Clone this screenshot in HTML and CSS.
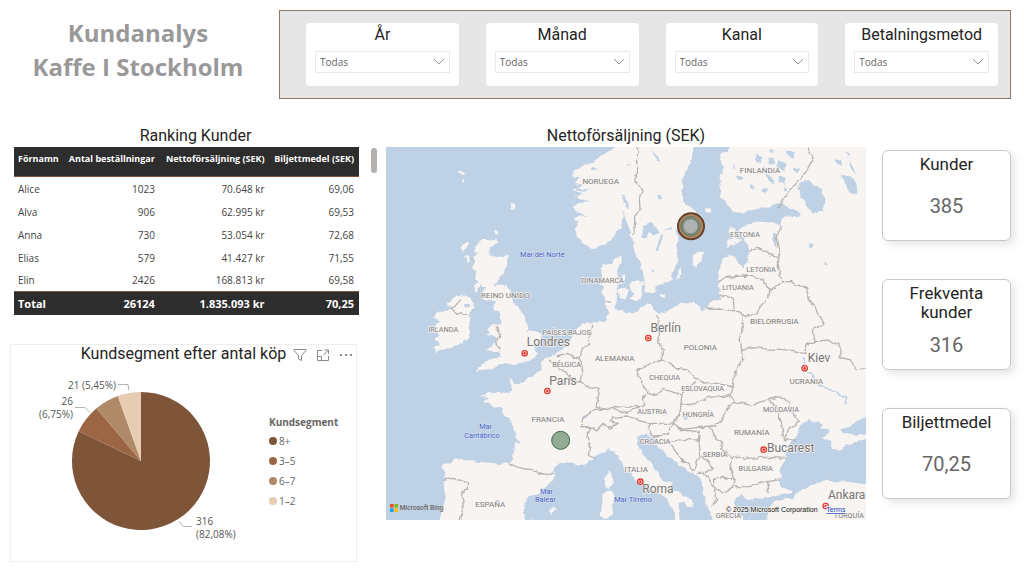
FILE: index.html
```html
<!DOCTYPE html>
<html lang="sv">
<head>
<meta charset="utf-8">
<meta name="viewport" content="width=device-width, initial-scale=1">
<title>Kundanalys – Kaffe I Stockholm</title>
<link rel="stylesheet" href="styles.css">
</head>
<body>
<div class="page">
  <header class="top">
    <h1 class="title">Kundanalys<br>Kaffe I Stockholm</h1>
    <form class="filters">
      <div class="filter">
        <label for="ar">År</label>
        <div class="pick"><select id="ar"><option>Todas</option></select><svg class="chev" viewBox="0 0 12 8"><path d="M1 1l5 5 5-5"/></svg></div>
      </div>
      <div class="filter">
        <label for="manad">Månad</label>
        <div class="pick"><select id="manad"><option>Todas</option></select><svg class="chev" viewBox="0 0 12 8"><path d="M1 1l5 5 5-5"/></svg></div>
      </div>
      <div class="filter">
        <label for="kanal">Kanal</label>
        <div class="pick"><select id="kanal"><option>Todas</option></select><svg class="chev" viewBox="0 0 12 8"><path d="M1 1l5 5 5-5"/></svg></div>
      </div>
      <div class="filter">
        <label for="betalning">Betalningsmetod</label>
        <div class="pick"><select id="betalning"><option>Todas</option></select><svg class="chev" viewBox="0 0 12 8"><path d="M1 1l5 5 5-5"/></svg></div>
      </div>
    </form>
  </header>

  <main class="board">
    <div class="left">
      <section class="ranking">
        <h2 class="heading">Ranking Kunder</h2>
        <div class="table-wrap">
          <table class="table">
            <colgroup><col class="c-name"><col class="c-orders"><col class="c-net"><col class="c-avg"></colgroup>
            <thead><tr><th>Förnamn</th><th>Antal beställningar</th><th>Nettoförsäljning (SEK)</th><th>Biljettmedel (SEK)</th></tr></thead>
            <tbody>
              <tr><td>Alice</td><td>1023</td><td>70.648 kr</td><td>69,06</td></tr>
              <tr><td>Alva</td><td>906</td><td>62.995 kr</td><td>69,53</td></tr>
              <tr><td>Anna</td><td>730</td><td>53.054 kr</td><td>72,68</td></tr>
              <tr><td>Elias</td><td>579</td><td>41.427 kr</td><td>71,55</td></tr>
              <tr><td>Elin</td><td>2426</td><td>168.813 kr</td><td>69,58</td></tr>
            </tbody>
            <tfoot><tr><td>Total</td><td>26124</td><td>1.835.093 kr</td><td>70,25</td></tr></tfoot>
          </table>
          <div class="thumb"></div>
        </div>
      </section>

      <section class="segment">
        <div class="segment-head">
          <h2 class="heading">Kundsegment efter antal köp</h2>
          <div class="tools">
            <button type="button" aria-label="Filter"><svg viewBox="0 0 14 14"><path d="M1 1.500h12v1L8.500 7.500v5l-3-1.500V7.500L1 2.500z"/></svg></button>
            <button type="button" aria-label="Fokusläge"><svg viewBox="0 0 14 14"><path d="M6 2.500H1.500v10h11V8M1.500 8.500h4v4M7 7.500l5-5M8.500 2h4v4"/></svg></button>
            <button type="button" aria-label="Fler alternativ"><svg viewBox="0 0 14 14"><g class="dots"><circle cx="2" cy="7" r="1"/><circle cx="7" cy="7" r="1"/><circle cx="12" cy="7" r="1"/></g></svg></button>
          </div>
        </div>
        <div class="segment-body">
          <svg class="pie" viewBox="1 -1 250 194">
            <path class="s1" d="M131 97V28A69 69 0 1 1 68.700 67.300z"/>
            <path class="s2" d="M131 97L68.700 67.300A69 69 0 0 1 86.500 44.300z"/>
            <path class="s3" d="M131 97L86.500 44.300A69 69 0 0 1 107.800 32z"/>
            <path class="s4" d="M131 97L107.800 32A69 69 0 0 1 131 28z"/>
            <path class="lead" d="M108 20.500h10l1 6M65 43.500h10l5 5M169 157l4 5.500h9"/>
            <text x="106" y="25" text-anchor="end">21 (5,45%)</text>
            <text x="63" y="41" text-anchor="end">26</text>
            <text x="63" y="54" text-anchor="end">(6,75%)</text>
            <text x="186" y="161">316</text>
            <text x="186" y="174">(82,08%)</text>
          </svg>
          <div class="legend">
            <h3>Kundsegment</h3>
            <ul>
              <li><i class="d1"></i>8+</li>
              <li><i class="d2"></i>3–5</li>
              <li><i class="d3"></i>6–7</li>
              <li><i class="d4"></i>1–2</li>
            </ul>
          </div>
        </div>
      </section>
    </div>

    <section class="geo">
      <h2 class="heading">Nettoförsäljning (SEK)</h2>
      <svg class="map" viewBox="18 21 1440 1119">
        <defs>
          <filter id="coast" filterUnits="userSpaceOnUse" x="-20" y="-20" width="1520" height="1200">
            <feTurbulence type="fractalNoise" baseFrequency="0.045" numOctaves="3" seed="4" result="n"/>
            <feDisplacementMap in="SourceGraphic" in2="n" scale="15" xChannelSelector="R" yChannelSelector="G"/>
          </filter>
          <g id="city"><circle class="city-ring" r="8"/><circle class="city-dot" r="4"/></g>
        </defs>
        <rect class="sea" x="18" y="21" width="1440" height="1119"/>
        <g filter="url(#coast)">
          <g class="land">
            <path d="M725 0L690 35 660 48 640 68 610 74 585 92 578 110 602 112 580 128 610 134 578 150 606 160 583 172 612 182 578 200 588 215 608 222 583 235 595 248 588 262 590 290 605 305 625 322 650 325 680 312 705 285 720 262 727 235 728 205 736 235 748 262 748 285 758 300 760 325 770 350 785 375 785 400 792 415 790 430 797 455 815 460 830 453 828 435 850 428 870 425 880 400 888 375 895 345 890 310 897 295 890 270 900 255 930 245 945 225 940 205 920 195 908 180 905 150 910 120 912 100 925 85 935 60 938 35 950 0z"/>
            <path d="M1055 0L1045 35 1020 38 1022 60 1030 90 1018 115 1024 150 1020 170 1035 185 1050 200 1060 213 1085 222 1105 215 1140 208 1170 198 1195 190 1215 190 1225 205 1260 218 1262 226 1235 230 1215 225 1205 240 1200 255 1180 248 1150 246 1130 245 1100 255 1080 265 1082 285 1092 298 1105 310 1106 340 1105 370 1090 382 1075 370 1065 350 1048 345 1028 360 1018 385 1015 410 1018 440 1020 465 1020 482 1000 480 985 488 985 502 968 514 955 500 945 490 915 487 880 500 860 515 838 522 820 508 815 497 800 492 785 505 760 515 740 523 735 515 712 512 705 495 710 485 712 455 710 445 715 435 735 420 735 403 712 405 712 390 722 370 722 350 705 355 692 372 668 375 663 400 665 415 660 430 672 440 668 460 675 483 675 495 685 515 683 530 675 548 660 543 635 550 610 552 590 565 575 590 560 615 540 635 525 645 500 655 483 665 485 690 470 702 445 712 430 728 400 730 398 717 385 715 390 735 397 752 370 760 345 755 320 760 302 770 325 775 310 785 325 790 345 800 370 808 372 825 388 840 400 860 408 880 402 890 420 912 405 905 403 930 398 960 388 970 360 972 330 968 290 965 250 960 225 955 205 970 188 973 185 985 195 1000 193 1020 197 1060 187 1100 175 1170 445 1170 432 1115 430 1090 450 1068 480 1058 500 1035 520 1020 525 1003 520 985 545 965 575 968 600 975 620 970 645 950 665 940 685 928 710 945 720 965 730 985 755 1000 775 1025 800 1040 830 1055 845 1065 860 1075 870 1100 885 1125 880 1170 905 1170 900 1115 892 1090 910 1085 925 1100 940 1100 935 1083 905 1065 870 1042 878 1028 850 1020 825 990 810 965 785 945 775 915 772 890 800 880 812 888 825 895 830 915 850 935 870 955 900 975 930 995 950 1005 968 1020 970 1050 975 1085 985 1105 995 1125 1000 1170 1085 1170 1090 1130 1075 1110 1060 1095 1065 1070 1085 1062 1100 1080 1130 1076 1165 1074 1200 1066 1240 1058 1205 1040 1198 1015 1205 980 1220 950 1220 930 1235 905 1250 890 1255 870 1268 850 1285 840 1310 845 1330 850 1322 862 1350 872 1345 884 1325 895 1350 902 1360 925 1380 933 1395 915 1430 905 1445 900 1500 890 1500 875 1430 885 1400 880 1380 868 1410 860 1440 835 1500 815 1500 0z"/>
            <path d="M1250 1062L1290 1038 1330 1022 1400 1025 1500 1038 1500 1170 1165 1170 1160 1112 1180 1088 1210 1078 1240 1070z"/>
            <path d="M300 300L320 300 350 295 352 308 330 325 328 345 350 348 386 347 384 370 375 395 362 415 350 425 340 432 375 435 392 452 400 490 412 500 432 522 440 545 443 560 440 575 470 573 485 585 483 600 470 612 462 628 472 640 470 650 452 662 425 668 400 672 375 672 352 674 338 688 318 688 300 694 283 697 305 680 322 660 340 652 362 650 360 636 342 636 322 630 345 612 350 595 335 588 318 584 330 578 318 568 332 556 352 556 362 548 358 530 355 512 345 512 340 496 350 484 330 482 312 480 305 465 315 445 305 432 295 445 285 460 284 440 295 425 282 410 290 395 275 385 285 370 280 350 292 345 283 330z"/>
            <path d="M225 470L250 465 268 472 280 488 284 505 268 518 268 545 270 575 262 600 240 612 215 622 190 632 168 635 158 625 178 610 165 598 180 585 160 575 165 555 182 545 160 535 165 518 185 512 208 512 215 500 200 490z"/>
            <path d="M240 320l22-15 6 8-18 22zM258 345l8 2 4 18-8 4zM342 270l10 2 4 12-10-2zM235 98l10-6 8 6-10 8zM392 195l10-4 6 12-12 10zM246 115l6 0 0 10-6 0z"/>
            <path d="M712 450l20-8 12 14-6 18-20 2zM750 430l24-10 16 10-4 30-18 24-16-8 10-16-16-14zM840 462l14 2-4 10-10-2zM968 335l-4 30-18 14-12-6 8-24 14-14zM905 378l-6 34-10 6 4-22z"/>
            <path d="M1042 300l24-8 18 8-20 12-26 10zM1048 268l20 0 2 16-18 2zM975 205l14 0 2 10-14 2z"/>
            <path d="M686 995l8 6 4 30-12 16-12-18 4-18zM668 1062l24-12 10 20-6 50-18 16-16-8 4-34zM505 1110l18-10 6 10-14 8zM450 1135l10 2-6 6z"/>
          </g>
          <g class="lakes">
            <path d="M790 255l20-8 18 14 10 16-18 8-14-10-8 24-12-8zM842 285l8-4-10 42-14 12zM880 262l-30 6 28 4zM725 165l8 4 12 24 2 14-8-4zM830 165l18 8-6 6-14-6zM815 30l18 20 8 18-14-12zM740 70l8 4-2 8zM812 385l8 4-6 10z"/>
            <path d="M1262 130l30-8 32 28 14 30-12 30-26 14-18-24-18-30-10-24zM1360 60l22-4 4 22-14-4zM1380 110l30-6 20 30 2 32-20-8-16-26zM1405 60l14 20 10 26-18-24zM1185 275l8 8-2 44-12-24 0-22zM1286 310l12 2-4 12-12-6zM1335 362l12 8-4 6-12-8zM1395 35l16 6-4 10z"/>
            <path d="M1130 40l14 14-6 20-10-12zM1165 50l18 4 4 22-16-4zM1195 60l22 12-4 20-20-10zM1220 30l24 6-4 20-16-8zM1155 100l20 12 10 22-18-8zM1195 105l26 6-6 24-16-10zM1068 105l20 6-4 12-14-4zM1110 130l14 8-2 12-12-6zM1240 80l20 6-8 14-12-6zM1060 70l8 8-6 12zM1148 75l8 4-6 10zM1210 140l14 6-8 10zM1150 140l10 4-2 18-10-8zM1165 28l20 0-8 12z"/>
            <path d="M562 568l18 4-10 14zM540 575l10 0-4 8zM585 140l50 10-40 2zM590 180l44 6-34 4zM590 218l34 10-30-2zM640 78l14 16-20-10zM255 492l14 0 0 10-12 0zM608 834l18-8-10 12zM905 838l22-8-10 12zM410 910l12-4-8-10zM712 402l18 2-4 6-16 0z"/>
          </g>
          <g class="river"><path d="M1272 652V690L1300 710 1318 735 1350 748 1378 765 1398 772 1400 790"/></g>
          <g class="borders">
            <path d="M770 15V80L768 125 786 148 778 175 780 205 764 225 764 250 758 285M1275 10L1300 55 1275 100 1245 135 1215 170 1195 205M1205 255L1192 290 1198 330 1196 352M1105 335L1130 325 1160 335 1180 350 1196 352 1195 380 1202 410 1210 425M1016 425L1040 412 1090 408 1115 410 1145 415 1165 440 1170 450 1195 435 1210 425 1235 425 1250 438 1280 440 1285 480 1305 500 1315 525 1332 550 1300 570 1305 605 1278 612 1275 640 1215 632 1170 630 1120 620 1085 632"/>
            <path d="M1020 465L1060 475 1062 508M978 507L1030 508 1078 515 1085 525 1130 525 1140 500 1165 475 1170 450M1085 525L1090 560 1080 590 1085 632 1088 660 1065 700 1060 735 1045 768 1065 785 1045 800 1020 850 990 862 955 862 905 868 882 848"/>
            <path d="M830 525L835 560 835 590 845 620 848 660 870 670 890 685 925 690 948 715 975 728 1010 730 1035 735 1060 740M848 660L810 670 770 692 785 730 805 758 790 778 795 795 740 802 705 800 680 808 648 802 660 745 625 740 600 725 608 690 600 660 605 630 628 610 630 580 635 555M805 758L830 765 850 748 885 758 903 765 920 745 948 728M903 765L900 790 940 795 985 772 1020 770 1045 768M900 790L895 830 882 848 860 850 810 850 770 840 740 828 700 832 690 845 715 850 685 865 670 850 650 870 620 860 605 860 615 830 645 808 680 808M700 808L740 820 790 795"/>
            <path d="M505 657L530 680 555 695 565 710 600 725M530 648L560 640 600 655M388 970L430 990 460 992 490 1002 523 1003M605 860L632 865 620 890 630 920 625 940 645 955M193 1020L215 1015 262 1025 262 1045 245 1060 250 1100 240 1145M815 850L808 868 820 888 860 885 882 848M865 905L910 898 955 900 962 945 940 990 895 945 865 905M882 848L900 870 958 875 955 900M958 862L990 862 1000 885 1025 905 1022 925 1055 950 1050 985 1065 1020M962 945L985 965 1000 985 970 1000 950 1000M1000 1020L1030 1008 1065 1020 1060 1045 1025 1058 1005 1045zM970 1000L1005 1045 1010 1075 995 1100M1060 1040L1110 1040 1160 1025 1200 1020M1160 1025L1165 1060M1055 950L1100 955 1165 952 1220 955M1065 785L1110 795 1165 780 1195 770 1225 785 1240 820 1258 845 1225 870 1210 900 1248 900M1165 780L1190 805 1205 850 1210 890M1305 605L1345 600 1365 615 1380 610 1380 650 1410 660 1425 685 1470 688"/>
            <path d="M240 475L228 495 215 505 228 520 245 515 262 525M352 558L358 580 350 605 358 632M675 484L695 486"/>
          </g>
        </g>
        <g class="country">
          <text x="662" y="133">NORUEGA</text>
          <text x="1140" y="100">FINLANDIA</text>
          <text x="376" y="475">REINO UNIDO</text>
          <text x="1183" y="552">BIELORRUSIA</text>
          <text x="961" y="629">POLONIA</text>
          <text x="704" y="663">ALEMANIA</text>
          <text x="504" y="846">FRANCIA</text>
          <text x="331" y="1102">ESPAÑA</text>
          <text x="1279" y="731">UCRANIA</text>
          <text x="1115" y="885">RUMANÍA</text>
          <text x="769" y="996">ITALIA</text>
        </g>
        <g class="country small">
          <text x="1095" y="291">ESTONIA</text>
          <text x="1143" y="396">LETONIA</text>
          <text x="1074" y="450">LITUANIA</text>
          <text x="668" y="430">DINAMARCA</text>
          <text x="190" y="575">IRLANDA</text>
          <text x="560" y="585">PAÍSES BAJOS</text>
          <text x="560" y="681">BÉLGICA</text>
          <text x="854" y="720">CHEQUIA</text>
          <text x="968" y="753">ESLOVAQUIA</text>
          <text x="816" y="821">AUSTRIA</text>
          <text x="955" y="830">HUNGRÍA</text>
          <text x="825" y="912">CROACIA</text>
          <text x="1005" y="950">SERBIA</text>
          <text x="1127" y="994">BULGARIA</text>
          <text x="1203" y="816">MOLDAVIA</text>
          <text x="1045" y="1133">GRECIA</text>
          <text x="1407" y="1133">TURQUÍA</text>
        </g>
        <g class="water">
          <text x="487" y="351">Mar del Norte</text>
          <text x="317" y="867">Mar</text>
          <text x="306" y="893">Cantábrico</text>
          <text x="500" y="1061">Mar</text>
          <text x="496" y="1086">Balear</text>
          <text x="759" y="1086">Mar Tirreno</text>
        </g>
        <g class="capital">
          <text x="857" y="575">Berlín</text>
          <text x="505" y="618">Londres</text>
          <text x="549" y="734">París</text>
          <text x="1317" y="667">Kiev</text>
          <text x="1232" y="937">Bucarest</text>
          <text x="834" y="1060">Roma</text>
          <text x="1400" y="1076">Ankara</text>
        </g>
        <use href="#city" x="805" y="594"/><use href="#city" x="434" y="640"/><use href="#city" x="502" y="753"/>
        <use href="#city" x="1274" y="685"/><use href="#city" x="1151" y="929"/><use href="#city" x="781" y="1025"/><use href="#city" x="1337" y="1098"/>
        <circle class="sale" cx="542" cy="901" r="27"/>
        <circle class="b1" cx="933" cy="259" r="39"/>
        <circle class="b2" cx="932" cy="259" r="30"/>
        <circle class="b3" cx="931" cy="259" r="26"/>
        <circle class="b4" cx="932" cy="259" r="22"/>
        <rect x="30" y="1092" width="11" height="11" fill="#e8532b"/><rect x="43" y="1092" width="11" height="11" fill="#82b928"/>
        <rect x="30" y="1105" width="11" height="11" fill="#1fa3e8"/><rect x="43" y="1105" width="11" height="11" fill="#fdb913"/>
        <text class="bing" x="59" y="1111">Microsoft Bing</text>
        <text class="copy" x="1038" y="1116">© 2025 Microsoft Corporation</text>
        <a href="#terms"><text class="terms" x="1339" y="1116">Terms</text></a>
      </svg>
    </section>

    <aside class="kpis">
      <section class="kpi"><h2>Kunder</h2><p>385</p></section>
      <section class="kpi"><h2>Frekventa kunder</h2><p>316</p></section>
      <section class="kpi"><h2>Biljettmedel</h2><p>70,25</p></section>
    </aside>
  </main>
</div>
</body>
</html>
```
FILE: styles.css
```css
* { box-sizing: border-box; }
body { margin: 0; background: #fff; color: #252423; font-family: "Open Sans", "Noto Sans", sans-serif; }
h1, h2, h3, p, ul { margin: 0; padding: 0; }
.page { padding: 10px 13px 8px 10px; }

.top { display: grid; grid-template-columns: 269fr 732fr; align-items: start; }
.title { padding: 6px 13px 0 0; color: #999; font-size: 24px; line-height: 34px; font-weight: 700; text-align: center; }
.filters {
  display: grid; grid-template-columns: repeat(4, 1fr); gap: 27px;
  padding: 12px 12px 12px 26px; border: 1px solid #8f7769; background: #e6e6e6;
}
.filter { padding: 1px 9px 13px; border-radius: 4px; background: #fff; }
.filter label { display: block; margin-bottom: 6px; font-family: Roboto, sans-serif; font-size: 16px; line-height: 21px; font-weight: 400; text-align: center; }
.pick { position: relative; }
.pick select {
  display: block; width: 100%; height: 22px; padding: 0 4px; appearance: none;
  border: 1px solid #e9e9e9; border-radius: 0; background: #fff; color: #666;
  font-family: "Open Sans", "Noto Sans", sans-serif; font-size: 10px;
}
.chev { position: absolute; top: 7px; right: 5px; width: 12px; height: 8px; fill: none; stroke: #999; pointer-events: none; }

.board { display: grid; grid-template-columns: 367fr 480fr 136fr; gap: 9px; padding-top: 25px; }
.heading { font-family: Roboto, sans-serif; font-size: 16px; line-height: 23px; font-weight: 400; text-align: center; }
.left { min-width: 0; }
.ranking { padding-left: 4px; }
.table-wrap { display: flex; gap: 12px; }
.table { flex: 1; min-width: 0; table-layout: fixed; border-collapse: collapse; color: #444; font-size: 10px; }
.c-name { width: 14%; } .c-orders { width: 28%; } .c-net { width: 32%; } .c-avg { width: 26%; }
.table th, .table td { padding: 0 5px 0 4px; white-space: nowrap; text-align: right; }
.table th:first-child, .table td:first-child { text-align: left; }
.table th { height: 29px; padding-bottom: 5px; background: #2d2d2d; border-bottom: 1px solid #7f5539; color: #fff; font-size: 9px; font-weight: 700; }
.table tbody td { height: 23px; padding-top: 2px; }
.table tfoot td { height: 24px; background: #2d2d2d; border-top: 1px solid #7f5539; color: #fff; font-size: 11px; font-weight: 700; }
.thumb { width: 6px; height: 25px; margin-top: 1px; border-radius: 3px; background: #b3b0ad; }

.segment { margin: 29px 20px 0 0; padding-bottom: 4px; border: 1px solid #eee; }
.segment-head { display: grid; grid-template-columns: 1fr auto 1fr; }
.segment-head .heading { grid-column: 2; line-height: 18px; white-space: nowrap; }
.tools { display: flex; justify-content: flex-end; align-items: center; gap: 9px; padding: 1px 3px 0 0; }
.tools button { width: 14px; height: 14px; padding: 0; border: 0; background: none; }
.tools svg { display: block; width: 14px; height: 14px; fill: none; stroke: #888; }
.tools .dots { fill: #666; stroke: none; }
.segment-body { display: flex; align-items: flex-start; }
.pie { flex: 250; min-width: 0; }
.pie text { fill: #555; font-size: 10px; }
.lead { fill: none; stroke: #b5b5b5; }
.s1 { fill: #7f5539; } .s2 { fill: #9c6644; } .s3 { fill: #b08968; } .s4 { fill: #e6ccb2; }
.legend { flex: 87; padding: 50px 0 0 8px; color: #666; }
.legend h3 { font-size: 10px; line-height: 18px; }
.legend ul { list-style: none; }
.legend li { display: flex; align-items: center; gap: 2px; height: 20px; font-size: 10px; }
.legend i { width: 8px; height: 8px; border-radius: 50%; }
.d1 { background: #7f5539; } .d2 { background: #9c6644; } .d3 { background: #b08968; } .d4 { background: #e6ccb2; }

.map { display: block; width: 100%; font-family: Roboto, sans-serif; text-anchor: middle; }
.map text { paint-order: stroke; stroke: #f7f4f2; stroke-width: 4px; stroke-linejoin: round; }
.sea { fill: #bfd1e5; }
.land { fill: #f7f4f2; }
.lakes { fill: #bfd1e5; }
.river { fill: none; stroke: #bfd1e5; stroke-width: 5px; }
.borders { fill: none; stroke: #b8b3b3; stroke-width: 4px; stroke-linejoin: round; }
.map .country { fill: #7d7d7d; font-size: 24px; }
.map .small { font-size: 22px; }
.map .capital { fill: #777; font-size: 36px; }
.map .water { fill: #4a63c4; font-size: 22px; }
.map .water text { stroke: #d3dfee; }
.city-ring { fill: #fff; stroke: #e23b30; stroke-width: 4px; }
.city-dot { fill: #e23b30; }
.sale { fill: #93ab90; stroke: #42694a; stroke-width: 3px; }
.b1 { fill: #b08968; stroke: #66402a; stroke-width: 6px; }
.b2 { fill: #a5926d; stroke: #7b7b50; stroke-width: 3px; }
.b3 { fill: none; stroke: #477a80; stroke-width: 3px; }
.b4 { fill: #b0b3b4; stroke: #8b8d87; stroke-width: 3px; }
.map .bing { fill: #666; font-size: 20px; font-weight: 500; text-anchor: start; stroke: none; }
.map .copy { fill: #111; font-family: "Liberation Sans", sans-serif; font-size: 21px; text-anchor: start; }
.map .terms { fill: #1a3fbf; font-family: "Liberation Sans", sans-serif; font-size: 21px; text-anchor: start; text-decoration: underline; }

.kpis { display: flex; flex-direction: column; gap: 38px; padding: 26px 0 0 7px; }
.kpi { display: flex; flex-direction: column; min-height: 91px; padding: 4px 10px 0; border: 1px solid #c8c8c8; border-radius: 6px; box-shadow: 4px 4px 8px rgba(0, 0, 0, .1); text-align: center; font-family: Roboto, sans-serif; }
.kpi h2 { font-size: 17px; line-height: 19px; font-weight: 400; }
.kpi p { margin: auto 0; padding-bottom: 2px; color: #666; font-size: 20px; line-height: 24px; font-weight: 400; }
```
